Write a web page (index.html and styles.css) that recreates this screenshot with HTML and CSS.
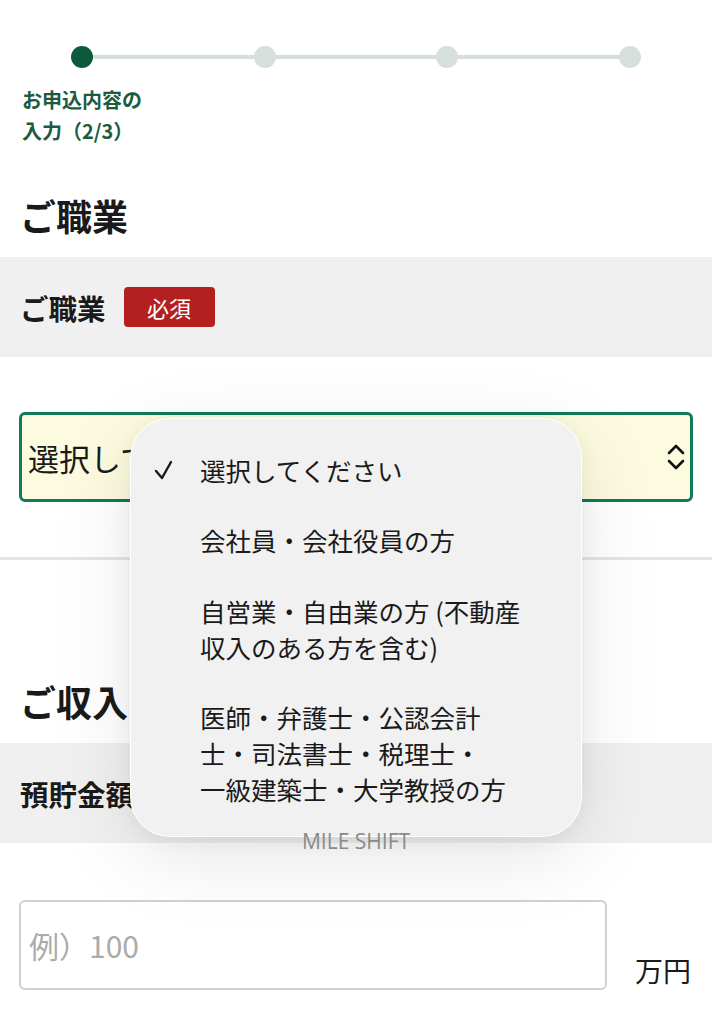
FILE: index.html
```html
<!DOCTYPE html>
<html lang="ja">
<head>
<meta charset="utf-8">
<title>お申込内容の入力</title>
<link rel="stylesheet" href="styles.css">
</head>
<body>
<div class="page">
  <ol class="stepper">
    <li class="step is-current"><span class="dot"></span><span class="step-label">お申込内容の<br>入力（2/3）</span></li>
    <li class="step"><span class="dot"></span></li>
    <li class="step"><span class="dot"></span></li>
    <li class="step"><span class="dot"></span></li>
  </ol>

  <section class="form-section first">
    <h2 class="section-title">ご職業</h2>
    <div class="field-head"><span class="field-label">ご職業</span><span class="badge">必須</span></div>
    <div class="field-body bordered">
      <div class="select">
        <span class="select-text">選択してください</span>
        <svg class="chevrons" width="20" height="30" viewBox="0 0 20 30" aria-hidden="true">
          <path d="M3 11 L10 4 L17 11" fill="none" stroke="#111" stroke-width="2.6" stroke-linecap="round" stroke-linejoin="round"/>
          <path d="M3 19 L10 26 L17 19" fill="none" stroke="#111" stroke-width="2.6" stroke-linecap="round" stroke-linejoin="round"/>
        </svg>
      </div>
    </div>
  </section>

  <section class="form-section second">
    <h2 class="section-title">ご収入</h2>
    <div class="field-head"><span class="field-label">預貯金額</span></div>
    <div class="field-body input-row">
      <div class="input"><span class="placeholder">例）100</span></div>
      <span class="unit">万円</span>
    </div>
  </section>

  <ul class="picker">
    <li class="option is-selected">
      <span class="check"><svg width="20" height="22" viewBox="0 0 20 22" aria-hidden="true"><path d="M2 12 L8 19 L17 3" fill="none" stroke="#1a1a1a" stroke-width="2.4" stroke-linecap="round" stroke-linejoin="round"/></svg></span>
      <span class="option-text">選択してください</span>
    </li>
    <li class="option"><span class="check"></span><span class="option-text">会社員・会社役員の方</span></li>
    <li class="option"><span class="check"></span><span class="option-text">自営業・自由業の方 (不動産<br>収入のある方を含む)</span></li>
    <li class="option"><span class="check"></span><span class="option-text">医師・弁護士・公認会計<br>士・司法書士・税理士・<br>一級建築士・大学教授の方</span></li>
  </ul>
  <div class="watermark">MILE SHIFT</div>
</div>
</body>
</html>
```

FILE: styles.css
```css
html, body {
  margin: 0;
  padding: 0;
  background: #fff;
  overflow: hidden;
}

body {
  font-family: "Noto Sans CJK JP", "Noto Sans", sans-serif;
  color: #1a1a1a;
}

.page {
  position: relative;
  width: 712px;
  height: 1024px;
  overflow: hidden;
}

/* stepper */
.stepper {
  position: relative;
  list-style: none;
  margin: 0;
  padding: 46px 22px 0;
  display: flex;
  justify-content: space-between;
  align-items: flex-start;
  height: 100px;
}

.stepper::before {
  content: "";
  position: absolute;
  top: 55px;
  left: 82px;
  right: 83px;
  height: 4px;
  background: #d6dedb;
}

.step {
  position: relative;
  width: 120px;
  display: flex;
  flex-direction: column;
  align-items: center;
}

.dot {
  width: 22px;
  height: 22px;
  border-radius: 50%;
  background: #d6dfdb;
}

.step.is-current .dot {
  background: #0f5a3d;
}

.step-label {
  align-self: stretch;
  margin-top: 16px;
  font-size: 20px;
  line-height: 31px;
  font-weight: 700;
  color: #1c5b3f;
  white-space: nowrap;
}

/* sections */
.section-title {
  margin: 0 0 17px;
  padding-left: 20px;
  font-size: 36px;
  line-height: 50px;
  font-weight: 700;
  color: #1a1a1a;
}

.form-section.first .section-title {
  margin-top: 44px;
}

.form-section.second .section-title {
  margin-top: 116px;
}

.field-head {
  height: 100px;
  background: #f0f0f0;
  display: flex;
  align-items: center;
  padding-left: 20px;
}

.field-label {
  font-size: 28.5px;
  font-weight: 700;
  color: #1a1a1a;
}

.badge {
  margin-left: 18px;
  width: 91px;
  height: 40px;
  border-radius: 4px;
  background: #b3201f;
  color: #fff;
  font-size: 22px;
  display: flex;
  align-items: center;
  justify-content: center;
}

.field-body {
  padding: 55px 19px;
}

.field-body.bordered {
  border-bottom: 3px solid #e6e6e6;
}

.select {
  height: 84px;
  border: 3px solid #0f7a5c;
  border-radius: 6px;
  background: #fdfbdf;
  display: flex;
  align-items: center;
  justify-content: space-between;
  padding: 0 4px 0 6px;
}

.select-text {
  font-size: 31px;
  color: #1a1a1a;
}

.input-row {
  padding: 57px 19px 0;
  display: flex;
  align-items: flex-end;
  gap: 28px;
}

.input {
  flex: none;
  width: 576px;
  height: 86px;
  border: 2px solid #d0d0d0;
  border-radius: 6px;
  background: #fff;
  display: flex;
  align-items: center;
  padding-left: 8px;
}

.placeholder {
  font-size: 30px;
  color: #ababab;
}

.unit {
  font-size: 28px;
  line-height: 40px;
  color: #1a1a1a;
  white-space: nowrap;
}

/* picker overlay */
.picker {
  position: absolute;
  top: 418px;
  left: 130px;
  width: 452px;
  box-sizing: border-box;
  margin: 0;
  padding: 15.5px 0 11.5px;
  list-style: none;
  background: #f1f1f1;
  border: 1.5px solid rgba(255, 255, 255, 0.95);
  border-radius: 40px;
  box-shadow: 0 20px 80px rgba(0, 0, 0, 0.10), 0 4px 20px rgba(0, 0, 0, 0.05);
  z-index: 2;
}

.option {
  display: flex;
  align-items: flex-start;
  padding: 17px 0 17.5px 23px;
}

.check {
  width: 46px;
  height: 36px;
  flex: none;
  display: flex;
  align-items: center;
}

.option-text {
  font-size: 25.5px;
  line-height: 36px;
  color: #1a1a1a;
  white-space: nowrap;
}

.watermark {
  position: absolute;
  top: 827px;
  left: 0;
  right: 0;
  text-align: center;
  font-family: "Open Sans", "Noto Sans", sans-serif;
  font-size: 21px;
  line-height: 28px;
  color: #8a8a8a;
  z-index: 3;
}
```
